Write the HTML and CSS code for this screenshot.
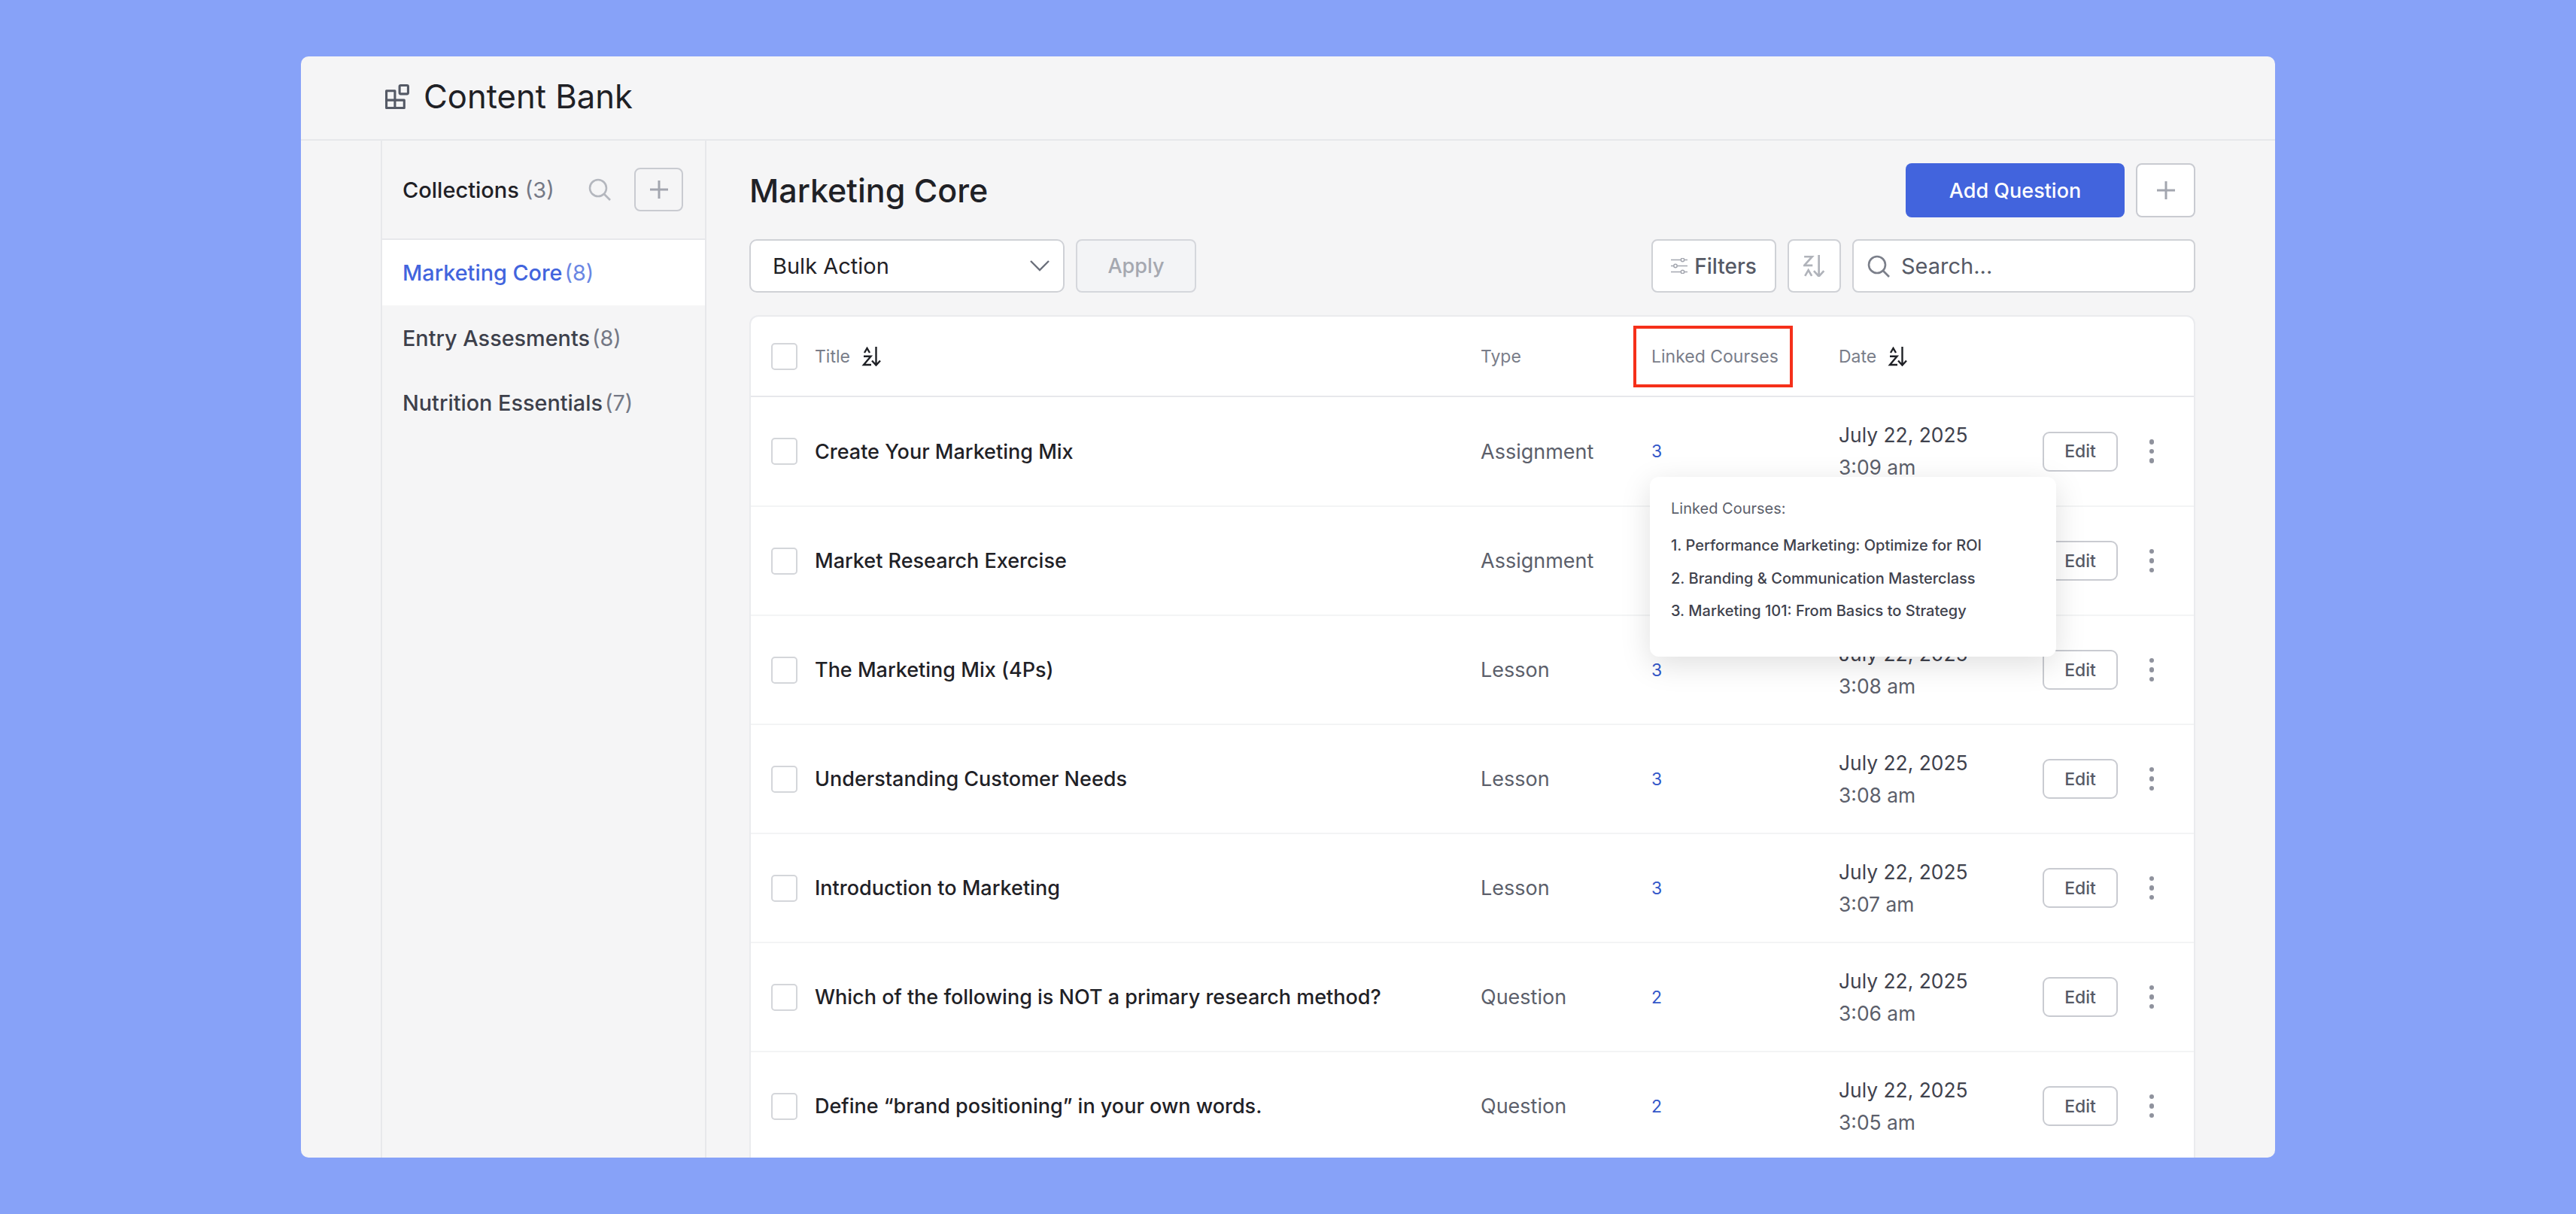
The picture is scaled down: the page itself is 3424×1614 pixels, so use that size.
FILE: index.html
```html
<!DOCTYPE html>
<html lang="en">
<head>
    <meta charset="UTF-8">
    <title>Content Bank</title>
    <link rel="stylesheet" href="styles.css">
</head>
<body>
    <svg class="defs" width="0" height="0">
        <symbol id="sort-az" viewBox="0 0 26 26">
            <path d="M4 8 7.500 2 11 8M3 12.700h9.500L3 24h10" fill="none" stroke="currentColor" stroke-width="2.400"/>
            <path d="M19.500 0v24M14 18.500l5.500 6 5.500-6" fill="none" stroke="currentColor" stroke-width="2.400"/>
        </symbol>
        <symbol id="sort-za" viewBox="0 0 26 26">
            <path d="M1 2h9.500L1 12.500h10M2 25l4-7 4 7" fill="none" stroke="currentColor" stroke-width="2.400"/>
            <path d="M18.500 0v25M12.500 19l6 6.500 6-6.500" fill="none" stroke="currentColor" stroke-width="2.400"/>
        </symbol>
        <symbol id="plus" viewBox="0 0 26 26">
            <path d="M13 1v24M1 13h24" fill="none" stroke="currentColor" stroke-width="3"/>
        </symbol>
        <symbol id="search" viewBox="0 0 30 30">
            <circle cx="13" cy="13" r="11" fill="none" stroke="currentColor" stroke-width="2.600"/>
            <path d="M21 21l8 8" fill="none" stroke="currentColor" stroke-width="2.600"/>
        </symbol>
    </svg>

    <div class="panel">
        <div class="topbar">
            <svg class="bank-icon" viewBox="0 0 32 32">
                <path d="M2.500 8.500h11v12h12v10h-23zM2.500 20.500h11v10" fill="none" stroke="#555a66" stroke-width="3" stroke-linejoin="round"/>
                <rect x="19.500" y="1.500" width="11" height="11" rx="1.500" fill="none" stroke="#555a66" stroke-width="3"/>
            </svg>
            <h1>Content Bank</h1>
        </div>

        <div class="main">
            <div class="sidebar">
                <div class="side-head">
                    <span class="side-title">Collections <span class="count">(3)</span></span>
                    <svg class="side-search"><use href="#search"/></svg>
                    <button class="square-btn side-add"><svg class="plus-icon"><use href="#plus"/></svg></button>
                </div>
                <div class="side-item active">Marketing Core<span class="count">(8)</span></div>
                <div class="side-item">Entry Assesments<span class="count">(8)</span></div>
                <div class="side-item">Nutrition Essentials<span class="count">(7)</span></div>
            </div>

            <div class="content">
                <div class="content-head">
                    <h2>Marketing Core</h2>
                    <div class="head-actions">
                        <button class="primary-btn">Add Question</button>
                        <button class="square-btn head-add"><svg class="plus-icon"><use href="#plus"/></svg></button>
                    </div>
                </div>

                <div class="toolbar">
                    <div class="bulk-select">
                        <span>Bulk Action</span>
                        <svg class="chevron" viewBox="0 0 26 15"><path d="M1 1l12 12L25 1" fill="none" stroke="#6b6f7b" stroke-width="2.400"/></svg>
                    </div>
                    <button class="apply-btn">Apply</button>
                    <button class="filters-btn">
                        <svg class="filter-icon" viewBox="0 0 22 21">
                            <path d="M0 2.500h13M18 2.500h4M0 10.500h3.500M8.500 10.500H22M0 18.500h13M18 18.500h4" fill="none" stroke="#a3a6af" stroke-width="1.500"/>
                            <circle cx="15.500" cy="2.500" r="2.200" fill="none" stroke="#a3a6af" stroke-width="1.500"/>
                            <circle cx="6" cy="10.500" r="2.200" fill="none" stroke="#a3a6af" stroke-width="1.500"/>
                            <circle cx="15.500" cy="18.500" r="2.200" fill="none" stroke="#a3a6af" stroke-width="1.500"/>
                        </svg>
                        Filters
                    </button>
                    <button class="sort-btn"><svg class="sort-icon"><use href="#sort-za"/></svg></button>
                    <div class="search-box">
                        <svg class="search-icon"><use href="#search"/></svg>
                        <span>Search...</span>
                    </div>
                </div>

                <div class="table">
                    <div class="row head-row">
                        <span class="checkbox"></span>
                        <span class="th">Title <svg class="sort-icon"><use href="#sort-az"/></svg></span>
                        <span class="th">Type</span>
                        <span class="th linked-th">Linked Courses</span>
                        <span class="th">Date <svg class="sort-icon"><use href="#sort-az"/></svg></span>
                    </div>

                    <div class="row">
                        <span class="checkbox"></span>
                        <span class="name">Create Your Marketing Mix</span>
                        <span class="type">Assignment</span>
                        <span class="linked">3</span>
                        <span class="date">July 22, 2025<small>3:09 am</small></span>
                        <button class="edit-btn">Edit</button>
                        <span class="dots"><i></i><i></i><i></i></span>
                    </div>
                    <div class="row">
                        <span class="checkbox"></span>
                        <span class="name">Market Research Exercise</span>
                        <span class="type">Assignment</span>
                        <span class="linked"></span>
                        <span class="date"></span>
                        <button class="edit-btn">Edit</button>
                        <span class="dots"><i></i><i></i><i></i></span>
                    </div>
                    <div class="row">
                        <span class="checkbox"></span>
                        <span class="name">The Marketing Mix (4Ps)</span>
                        <span class="type">Lesson</span>
                        <span class="linked">3</span>
                        <span class="date">July 22, 2025<small>3:08 am</small></span>
                        <button class="edit-btn">Edit</button>
                        <span class="dots"><i></i><i></i><i></i></span>
                    </div>
                    <div class="row">
                        <span class="checkbox"></span>
                        <span class="name">Understanding Customer Needs</span>
                        <span class="type">Lesson</span>
                        <span class="linked">3</span>
                        <span class="date">July 22, 2025<small>3:08 am</small></span>
                        <button class="edit-btn">Edit</button>
                        <span class="dots"><i></i><i></i><i></i></span>
                    </div>
                    <div class="row">
                        <span class="checkbox"></span>
                        <span class="name">Introduction to Marketing</span>
                        <span class="type">Lesson</span>
                        <span class="linked">3</span>
                        <span class="date">July 22, 2025<small>3:07 am</small></span>
                        <button class="edit-btn">Edit</button>
                        <span class="dots"><i></i><i></i><i></i></span>
                    </div>
                    <div class="row">
                        <span class="checkbox"></span>
                        <span class="name">Which of the following is NOT a primary research method?</span>
                        <span class="type">Question</span>
                        <span class="linked">2</span>
                        <span class="date">July 22, 2025<small>3:06 am</small></span>
                        <button class="edit-btn">Edit</button>
                        <span class="dots"><i></i><i></i><i></i></span>
                    </div>
                    <div class="row">
                        <span class="checkbox"></span>
                        <span class="name">Define “brand positioning” in your own words.</span>
                        <span class="type">Question</span>
                        <span class="linked">2</span>
                        <span class="date">July 22, 2025<small>3:05 am</small></span>
                        <button class="edit-btn">Edit</button>
                        <span class="dots"><i></i><i></i><i></i></span>
                    </div>

                    <div class="popup">
                        <p class="popup-title">Linked Courses:</p>
                        <p>1. Performance Marketing: Optimize for ROI</p>
                        <p>2. Branding &amp; Communication Masterclass</p>
                        <p>3. Marketing 101: From Basics to Strategy</p>
                    </div>
                </div>
            </div>
        </div>
    </div>
</body>
</html>
```

FILE: styles.css
```css
* {
    box-sizing: border-box;
}

html, body {
    height: 100%;
}

body {
    margin: 0;
    padding: 75px 400px;
    background-color: #87a2f8;
    font-family: Inter, "Liberation Sans", sans-serif;
    color: #1f2126;
    overflow: hidden;
}

button {
    font-family: inherit;
    cursor: pointer;
}

.defs {
    position: absolute;
}

.panel {
    height: 100%;
    display: flex;
    flex-direction: column;
    background-color: #f5f5f6;
    border-radius: 10px;
    overflow: hidden;
}

.topbar {
    flex: none;
    height: 112px;
    display: flex;
    align-items: center;
    gap: 19px;
    padding: 0 0 4px 111px;
    border-bottom: 2px solid #e7e8eb;
}

.bank-icon {
    width: 33px;
    height: 33px;
}

.topbar h1 {
    margin: 0;
    font-size: 43.600px;
    font-weight: 400;
}

.main {
    flex: 1;
    min-height: 0;
    display: flex;
    padding-left: 106px;
}

/* sidebar */
.sidebar {
    flex: none;
    width: 433px;
    border-left: 2px solid #e7e8eb;
    border-right: 2px solid #e7e8eb;
}

.side-head {
    height: 132px;
    display: flex;
    align-items: center;
    padding: 0 29px 0 27px;
    border-bottom: 2px solid #e7e8eb;
}

.side-title {
    flex: 1;
    font-size: 29px;
    font-weight: 500;
}

.count {
    font-weight: 400;
    color: #747885;
}

.side-item .count {
    margin-left: 3px;
}

.side-search {
    width: 30px;
    height: 30px;
    margin-right: 31px;
    color: #b4b7be;
}

.square-btn {
    display: flex;
    align-items: center;
    justify-content: center;
    padding: 0;
    border: 2px solid #c9cbd1;
    border-radius: 8px;
    color: #a3a6af;
}

.side-add {
    width: 65px;
    height: 58px;
    background: none;
}

.head-add {
    width: 79px;
    height: 72px;
    background-color: #fff;
}

.plus-icon {
    width: 26px;
    height: 26px;
}

.side-item {
    height: 86px;
    display: flex;
    align-items: center;
    padding-left: 27px;
    font-size: 28.800px;
    font-weight: 500;
    color: #3d404b;
}

.side-item.active {
    height: 87px;
    background-color: #fff;
    color: #4264dd;
}

.side-item.active .count {
    color: #6a86e3;
}

/* content */
.content {
    flex: 1;
    min-width: 0;
    padding: 30px 106px 0 57px;
}

.content-head {
    display: flex;
    align-items: center;
    justify-content: space-between;
    height: 72px;
}

.content-head h2 {
    margin: 0;
    font-size: 43px;
    font-weight: 500;
}

.head-actions {
    display: flex;
    gap: 15px;
}

.primary-btn {
    width: 291px;
    height: 72px;
    border: none;
    border-radius: 8px;
    background-color: #4264dd;
    color: #fff;
    font-size: 27px;
    font-weight: 500;
}

.toolbar {
    display: flex;
    height: 71px;
    margin-top: 29px;
}

.bulk-select {
    width: 419px;
    display: flex;
    align-items: center;
    justify-content: space-between;
    padding: 0 18px 0 29px;
    background-color: #fff;
    border: 2px solid #cfd1d6;
    border-radius: 10px;
    font-size: 29px;
}

.chevron {
    width: 26px;
    height: 15px;
}

.apply-btn {
    width: 160px;
    margin-left: 15px;
    margin-right: auto;
    background-color: #f3f4f6;
    border: 2px solid #d5d7dc;
    border-radius: 8px;
    color: #a5a8b0;
    font-size: 27px;
    font-weight: 500;
}

.filters-btn {
    width: 166px;
    display: flex;
    align-items: center;
    justify-content: center;
    gap: 9px;
    padding: 0;
    background-color: #fff;
    border: 2px solid #cfd1d6;
    border-radius: 8px;
    color: #565a66;
    font-size: 28px;
    font-weight: 500;
}

.filter-icon {
    width: 22px;
    height: 21px;
}

.sort-btn {
    width: 71px;
    margin-left: 15px;
    margin-right: 15px;
    display: flex;
    align-items: center;
    justify-content: center;
    padding: 0;
    background-color: #fff;
    border: 2px solid #cfd1d6;
    border-radius: 8px;
    color: #b0b3ba;
}

.sort-btn .sort-icon {
    width: 29px;
    height: 29px;
    color: #b0b3ba;
}

.search-box {
    flex: none;
    width: 456px;
    display: flex;
    align-items: center;
    gap: 15px;
    padding-left: 18px;
    background-color: #fff;
    border: 2px solid #cfd1d6;
    border-radius: 8px;
    color: #565a66;
    font-size: 29px;
}

.search-icon {
    width: 30px;
    height: 30px;
    color: #7b7f8a;
}

/* table */
.table {
    position: relative;
    margin-top: 30px;
    background-color: #fff;
    border: 2px solid #eaebee;
    border-bottom: none;
    border-radius: 12px 12px 0 0;
}

.row {
    display: grid;
    grid-template-columns: 58px 885px 227px 249px 271px 100px 1fr;
    align-items: center;
    height: 145px;
    padding-left: 27px;
    border-top: 2px solid #f3f4f5;
}

.head-row {
    height: 107px;
    border-top: none;
    border-bottom: 2px solid #e7e8eb;
}

.head-row + .row {
    border-top: none;
    height: 144px;
}

.checkbox {
    width: 35px;
    height: 36px;
    border: 2px solid #d4d6da;
    border-radius: 5px;
    background-color: #fff;
}

.th {
    display: flex;
    align-items: center;
    gap: 15px;
    font-size: 23px;
    color: #797d89;
}

.sort-icon {
    width: 26px;
    height: 26px;
    color: #1f2126;
}

.linked-th {
    position: relative;
}

/* red marker around the column head */
.linked-th::after {
    content: "";
    position: absolute;
    left: -24px;
    top: -27px;
    width: 212px;
    height: 82px;
    border: 4px solid #f5301a;
    box-sizing: border-box;
}

.name {
    font-size: 27px;
    font-weight: 500;
}

.type {
    font-size: 27px;
    color: #5c5f6b;
}

.linked {
    font-size: 23px;
    font-weight: 400;
    color: #3358c9;
}

.date {
    font-size: 26.400px;
    line-height: 43px;
    color: #3f424d;
}

.date small {
    display: block;
    font-size: 26.400px;
    color: #5c5f6b;
}

.edit-btn {
    width: 100px;
    height: 53px;
    padding: 0;
    background-color: #fff;
    border: 2px solid #c9cbd1;
    border-radius: 9px;
    color: #565a66;
    font-size: 23px;
    font-weight: 500;
}

.dots {
    display: flex;
    flex-direction: column;
    align-items: center;
    gap: 6px;
    width: 6px;
    margin-left: 42px;
}

.dots i {
    flex: none;
    width: 6.500px;
    height: 6.500px;
    border-radius: 50%;
    background-color: #8f929d;
}

.popup {
    position: absolute;
    left: 1195px;
    top: 213px;
    width: 540px;
    height: 239px;
    padding: 21px 28px;
    background-color: #fff;
    border-radius: 12px;
    box-shadow: 0 10px 40px rgba(0, 0, 0, 0.13);
}

.popup p {
    margin: 0;
    height: 43.500px;
    line-height: 43.500px;
    font-size: 20px;
    font-weight: 500;
    color: #3f424d;
}

.popup .popup-title {
    height: 49px;
    font-weight: 400;
    color: #5c5f6b;
}
```
